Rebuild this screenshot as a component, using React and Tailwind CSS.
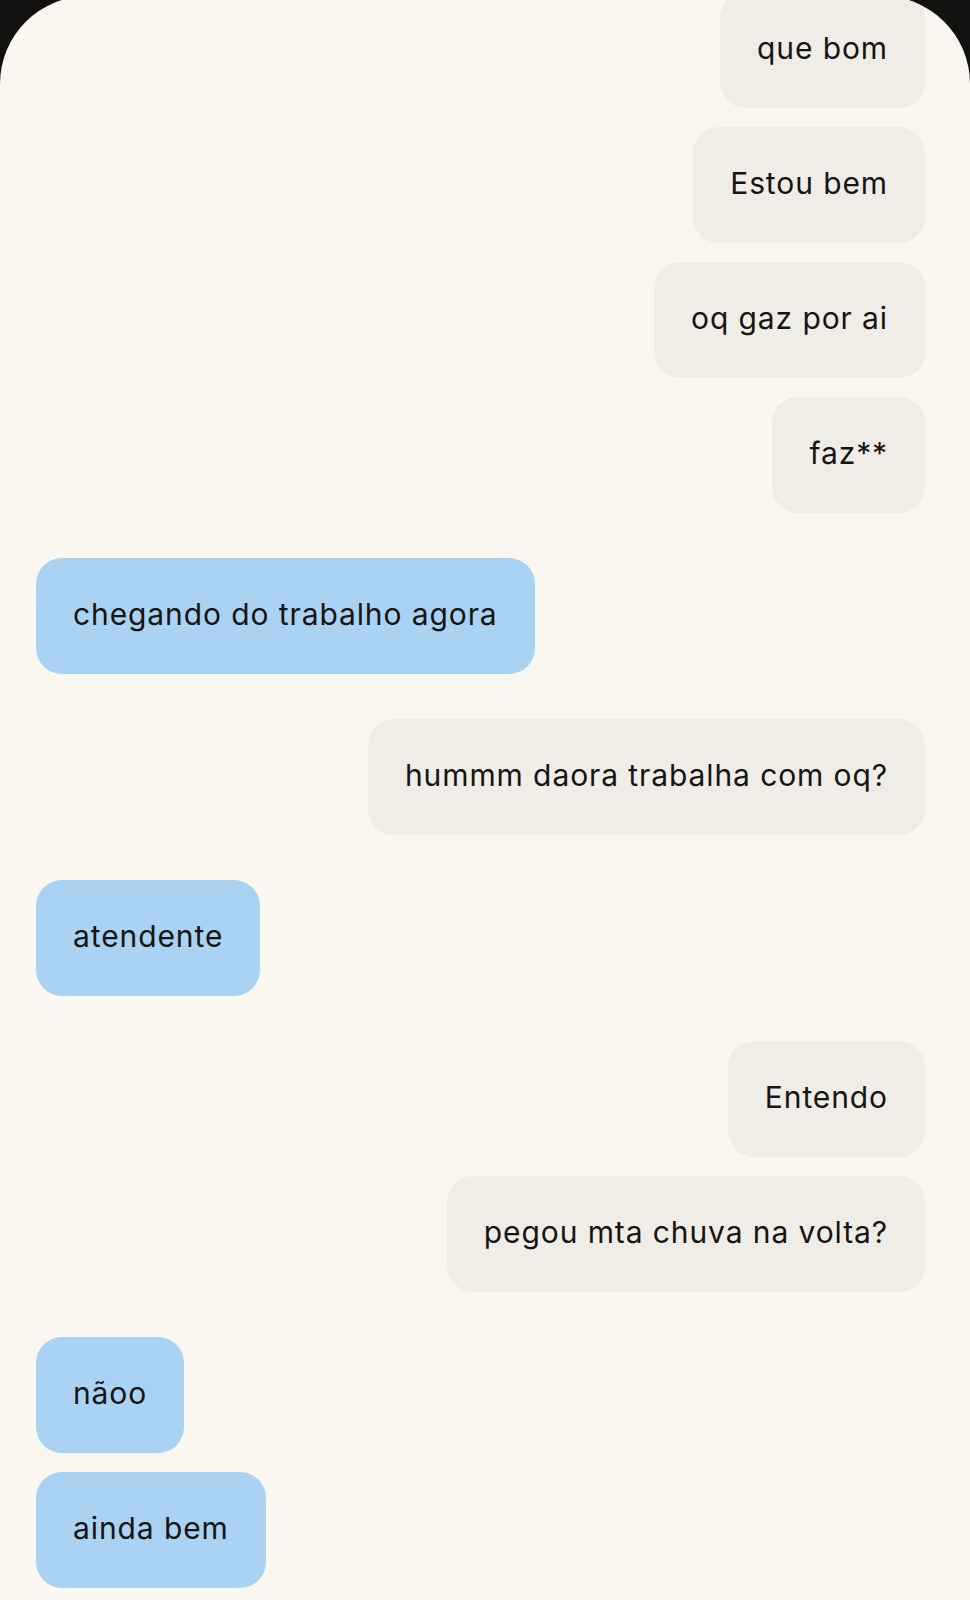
const messages = [
  { text: "que bom", me: true },
  { text: "Estou bem", me: true },
  { text: "oq gaz por ai", me: true },
  { text: "faz**", me: true },
  { text: "chegando do trabalho agora", me: false },
  { text: "hummm daora trabalha com oq?", me: true },
  { text: "atendente", me: false },
  { text: "Entendo", me: true },
  { text: "pegou mta chuva na volta?", me: true },
  { text: "nãoo", me: false },
  { text: "ainda bem", me: false },
];

function Bubble({ text, me }) {
  return (
    <div className={me ? "flex justify-end" : "flex justify-start"}>
      <div
        className={
          "rounded-[26px] px-[37px] pt-[38px] pb-[42px] text-[30px] leading-9 tracking-[0.9px] text-[#161513] " +
          (me ? "bg-[#f0ece6]" : "bg-[#aad2f3]")
        }
      >
        {text}
      </div>
    </div>
  );
}

export default function App() {
  return (
    <div className="h-[1600px] w-[970px] overflow-hidden bg-[#13110f]">
      <div
        className="h-[1604px] -mt-[4px] overflow-hidden rounded-t-[88px] bg-[#faf7f1] pl-[36px] pr-[45px]"
        style={{ fontFamily: "Inter, 'Noto Sans', sans-serif" }}
      >
        <div className="-mt-[4px] flex flex-col">
          {messages.map((m, i) => {
            const prev = messages[i - 1];
            const gap = !prev ? "" : prev.me === m.me ? "mt-[19px]" : "mt-[45px]";
            return (
              <div key={i} className={gap}>
                <Bubble text={m.text} me={m.me} />
              </div>
            );
          })}
        </div>
      </div>
    </div>
  );
}
